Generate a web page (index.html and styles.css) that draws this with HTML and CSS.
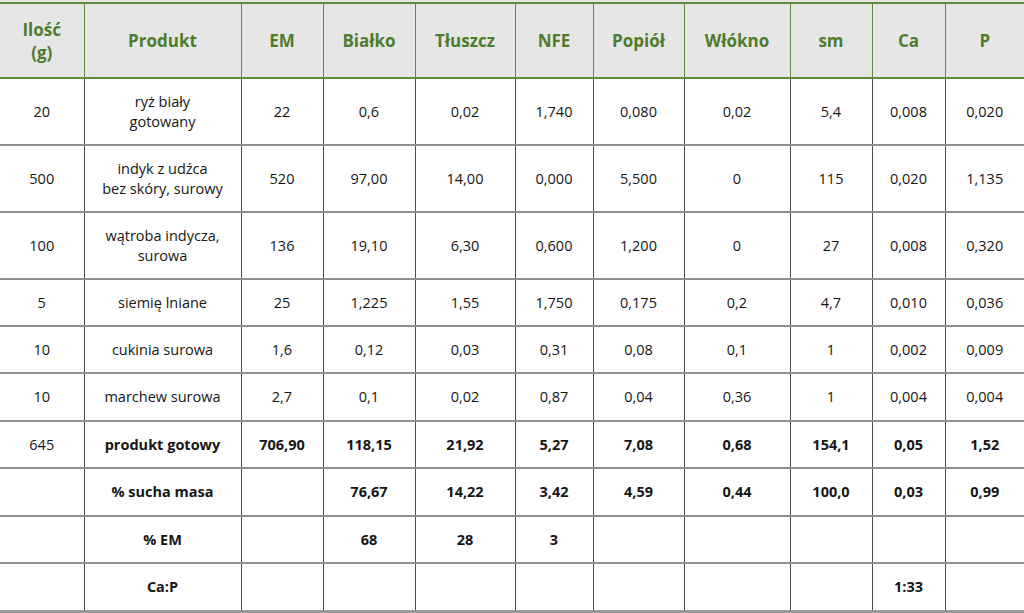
FILE: index.html
```html
<!DOCTYPE html>
<html lang="pl">
<head>
<meta charset="utf-8">
<link rel="stylesheet" href="styles.css">
</head>
<body>
<div class="strip"></div>
<table class="nutri">
  <colgroup>
    <col class="c1"><col class="c2"><col class="c3"><col class="c4"><col class="c5"><col class="c6"><col class="c7"><col class="c8"><col class="c9"><col class="c10"><col class="c11">
  </colgroup>
  <thead>
    <tr>
      <th>Ilość<br>(g)</th><th>Produkt</th><th>EM</th><th>Białko</th><th>Tłuszcz</th><th>NFE</th><th>Popiół</th><th>Włókno</th><th>sm</th><th>Ca</th><th>P</th>
    </tr>
  </thead>
  <tbody>
    <tr class="tall">
      <td>20</td><td>ryż biały<br>gotowany</td><td>22</td><td>0,6</td><td>0,02</td><td>1,740</td><td>0,080</td><td>0,02</td><td>5,4</td><td>0,008</td><td>0,020</td>
    </tr>
    <tr class="tall">
      <td>500</td><td>indyk z udźca<br>bez skóry, surowy</td><td>520</td><td>97,00</td><td>14,00</td><td>0,000</td><td>5,500</td><td>0</td><td>115</td><td>0,020</td><td>1,135</td>
    </tr>
    <tr class="tall">
      <td>100</td><td>wątroba indycza,<br>surowa</td><td>136</td><td>19,10</td><td>6,30</td><td>0,600</td><td>1,200</td><td>0</td><td>27</td><td>0,008</td><td>0,320</td>
    </tr>
    <tr>
      <td>5</td><td>siemię lniane</td><td>25</td><td>1,225</td><td>1,55</td><td>1,750</td><td>0,175</td><td>0,2</td><td>4,7</td><td>0,010</td><td>0,036</td>
    </tr>
    <tr>
      <td>10</td><td>cukinia surowa</td><td>1,6</td><td>0,12</td><td>0,03</td><td>0,31</td><td>0,08</td><td>0,1</td><td>1</td><td>0,002</td><td>0,009</td>
    </tr>
    <tr class="taller">
      <td>10</td><td>marchew surowa</td><td>2,7</td><td>0,1</td><td>0,02</td><td>0,87</td><td>0,04</td><td>0,36</td><td>1</td><td>0,004</td><td>0,004</td>
    </tr>
    <tr class="bold">
      <td class="normal">645</td><td>produkt gotowy</td><td>706,90</td><td>118,15</td><td>21,92</td><td>5,27</td><td>7,08</td><td>0,68</td><td>154,1</td><td>0,05</td><td>1,52</td>
    </tr>
    <tr class="bold taller">
      <td></td><td>% sucha masa</td><td></td><td>76,67</td><td>14,22</td><td>3,42</td><td>4,59</td><td>0,44</td><td>100,0</td><td>0,03</td><td>0,99</td>
    </tr>
    <tr class="bold">
      <td></td><td>% EM</td><td></td><td>68</td><td>28</td><td>3</td><td></td><td></td><td></td><td></td><td></td>
    </tr>
    <tr class="bold last">
      <td></td><td>Ca:P</td><td></td><td></td><td></td><td></td><td></td><td></td><td></td><td>1:33</td><td></td>
    </tr>
  </tbody>
</table>
</body>
</html>
```
FILE: styles.css
```css
html, body {
  margin: 0;
  padding: 0;
  background: #ffffff;
}
body {
  font-family: "Open Sans", "Noto Sans", sans-serif;
  color: #161616;
}
.strip {
  height: 2px;
  background: #e6e6e6;
}
.nutri {
  width: 1024px;
  border-collapse: collapse;
  table-layout: fixed;
}
.c1 { width: 84px; }
.c2 { width: 157px; }
.c3 { width: 82px; }
.c4 { width: 92px; }
.c5 { width: 100px; }
.c6 { width: 78px; }
.c7 { width: 91px; }
.c8 { width: 106px; }
.c9 { width: 82px; }
.c10 { width: 73px; }
.c11 { width: 79px; }

.nutri th {
  background: #e6e6e6;
  color: #4f7d2e;
  font-size: 17px;
  font-weight: 700;
  line-height: 23px;
  height: 73px;
  padding: 0;
  text-align: center;
  vertical-align: middle;
  border-top: 2px solid #5e8c3f;
  border-bottom: 2px solid #5e8c3f;
  border-left: 1px solid #5e8c3f;
}
.nutri th:first-child { border-left: none; }

.nutri td {
  font-size: 14.5px;
  line-height: 20px;
  padding: 0;
  height: 45px;
  text-align: center;
  vertical-align: middle;
  border-top: 2px solid #8f8f8f;
  border-left: 1px solid #4a4a4a;
}
.nutri td:first-child { border-left: none; }
.nutri thead + tbody tr:first-child td { border-top: none; }
.nutri tr.tall td { height: 65px; }
.nutri tr.taller td { height: 46px; }
.nutri tr.bold td { font-weight: 700; }
.nutri tr.bold td.normal { font-weight: 400; }
.nutri tr.last td {
  height: 46px;
  border-bottom: 3px solid #9a9a9a;
}
```
